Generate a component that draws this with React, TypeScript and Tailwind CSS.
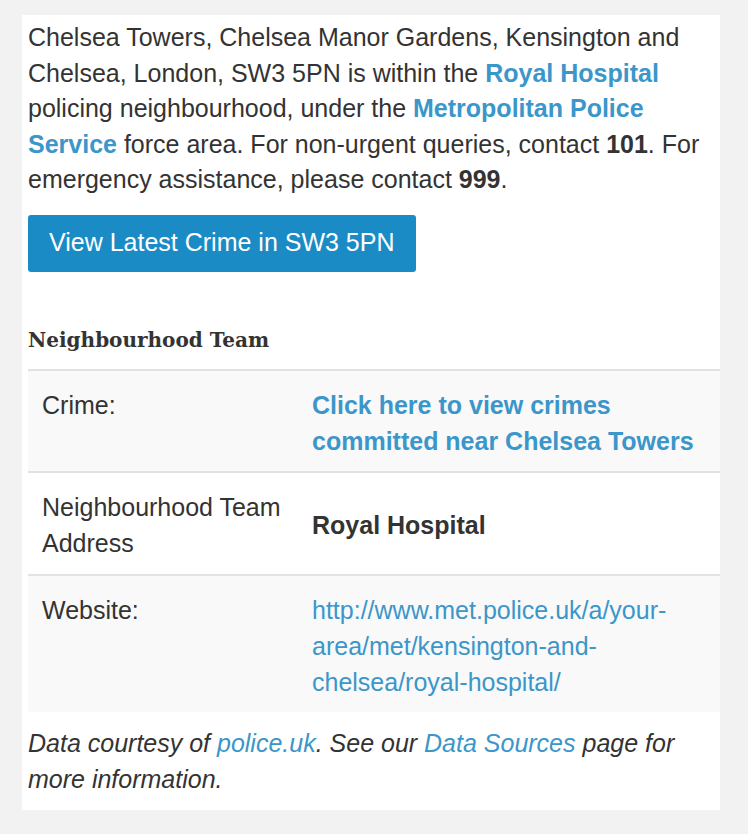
import React from "react";

const sans = { fontFamily: '"Liberation Sans", Arial, sans-serif' };

export default function App() {
  return (
    <div className="min-h-[834px] w-[748px] bg-[#f2f2f2] pt-[15px] pl-[22px]" style={sans}>
      <div className="w-[698px] bg-white pl-[6px]">
        <p className="pr-[12px] pt-[5px] text-[25px] leading-[35.5px] text-[#333333]">
          Chelsea Towers, Chelsea Manor Gardens, Kensington and Chelsea, London, SW3 5PN is within the{" "}
          <a className="font-bold text-[#3b96c9]">Royal Hospital</a> policing neighbourhood, under the{" "}
          <a className="font-bold text-[#3b96c9]">Metropolitan Police Service</a> force area. For non-urgent queries, contact{" "}
          <b>101</b>. For emergency assistance, please contact <b>999</b>.
        </p>
        <div className="mt-[17px]">
          <button className="h-[57px] rounded-[3px] bg-[#1b8bc6] px-[21px] text-[25px] text-white">
            View Latest Crime in SW3 5PN
          </button>
        </div>
        <h3
          className="mt-[54px] mb-[14px] text-[20px] font-bold leading-[29px] text-[#333333]"
          style={{ fontFamily: '"DejaVu Serif", serif' }}
        >
          Neighbourhood Team
        </h3>
        <table className="w-[692px] border-collapse text-[25px] leading-[36px] text-[#333333]">
          <tbody>
            <tr className="border-t-2 border-[#e2e2e2] bg-[#f9f9f9]">
              <td className="w-[270px] px-[14px] pt-[16px] pb-[12px] align-top">Crime:</td>
              <td className="px-[14px] pt-[16px] pb-[12px] align-top font-bold text-[#3b96c9]">
                Click here to view crimes committed near Chelsea Towers
              </td>
            </tr>
            <tr className="border-t-2 border-[#e2e2e2] bg-white">
              <td className="px-[14px] pt-[16px] pb-[13px] align-middle">Neighbourhood Team Address</td>
              <td className="px-[14px] pt-[16px] pb-[13px] align-middle font-bold">Royal Hospital</td>
            </tr>
            <tr className="border-t-2 border-[#e2e2e2] bg-[#f9f9f9]">
              <td className="px-[14px] pt-[16px] pb-[12px] align-top">Website:</td>
              <td className="px-[14px] pt-[16px] pb-[12px] align-top text-[#3b96c9]">
                http://www.met.police.uk/a/your-area/met/kensington-and-chelsea/royal-hospital/
              </td>
            </tr>
          </tbody>
        </table>
        <p className="pt-[13px] pb-[13px] pr-[20px] text-[25px] italic leading-[36px] text-[#333333]">
          Data courtesy of <a className="text-[#3b96c9]">police.uk</a>. See our{" "}
          <a className="text-[#3b96c9]">Data Sources</a> page for more information.
        </p>
      </div>
    </div>
  );
}
